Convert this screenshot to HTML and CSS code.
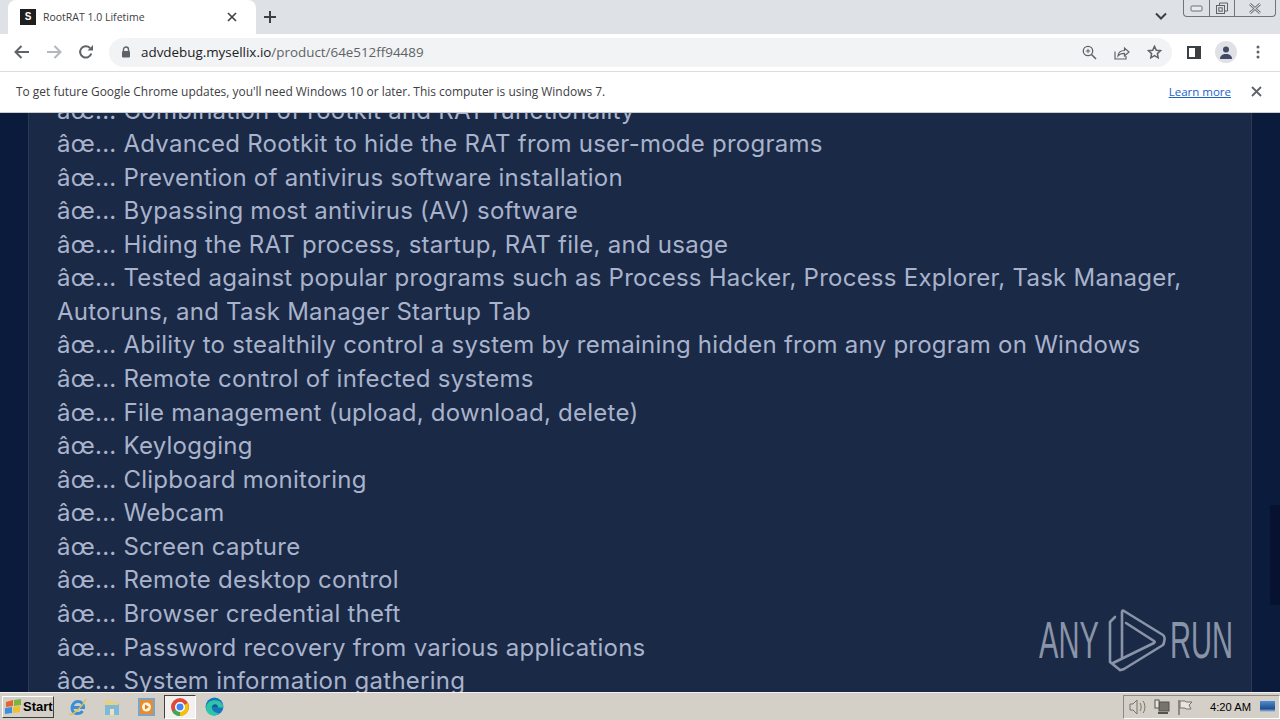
FILE: index.html
```html
<!DOCTYPE html>
<html lang="en">
<head>
<meta charset="utf-8">
<title>RootRAT 1.0 Lifetime</title>
<link rel="stylesheet" href="styles.css">
</head>
<body>
<div class="tabstrip">
  <div class="tab">
    <span class="favicon">S</span>
    <span class="tab-title">RootRAT 1.0 Lifetime</span>
    <svg class="tab-close" width="10" height="10" viewBox="0 0 10 10"><path d="M1 1l8 8M9 1l-8 8" stroke="#3c4043" stroke-width="1.6"/></svg>
  </div>
  <svg class="newtab" width="14" height="14" viewBox="0 0 14 14"><path d="M7 1v12M1 7h12" stroke="#3c4043" stroke-width="2"/></svg>
  <div class="strip-space"></div>
  <svg class="tab-chevron" width="12" height="8" viewBox="0 0 12 8"><path d="M1 1.500l5 5 5-5" fill="none" stroke="#3c4043" stroke-width="2"/></svg>
  <div class="winbtns">
    <span class="winbtn w-min"><svg width="13" height="7" viewBox="0 0 13 7"><rect x="1" y="1" width="11" height="5" rx="1" fill="#e8eaee" stroke="#6d7278"/></svg></span>
    <span class="winbtn w-max"><svg width="14" height="13" viewBox="0 0 14 13"><path d="M4.500 3.500v-2.500h8v8h-2.500" fill="none" stroke="#5f6368"/><rect x="1.500" y="3.500" width="8" height="8" fill="none" stroke="#5f6368"/><rect x="3.800" y="5.800" width="3.400" height="3.400" fill="none" stroke="#5f6368"/></svg></span>
    <span class="winbtn w-close"><svg width="14" height="11" viewBox="0 0 14 11"><path d="M2 1l10 9M12 1l-10 9" stroke="#6d7278" stroke-width="2.600"/><path d="M2 1l10 9M12 1l-10 9" stroke="#eceef1" stroke-width="1"/></svg></span>
  </div>
</div>
<div class="toolbar">
  <svg class="nav" width="16" height="14" viewBox="0 0 16 14"><path d="M15 7H2M7.500 1L1.500 7l6 6" fill="none" stroke="#5f6368" stroke-width="2"/></svg>
  <svg class="nav nav-fwd" width="16" height="14" viewBox="0 0 16 14"><path d="M1 7h13M8.500 1l6 6-6 6" fill="none" stroke="#b4b7bb" stroke-width="2"/></svg>
  <svg class="nav nav-reload" width="16" height="16" viewBox="0 0 16 16"><path d="M13.300 9.500A5.700 5.700 0 1 1 12 4" fill="none" stroke="#5f6368" stroke-width="2"/><path d="M9.500 6.500h5.500V1z" fill="#5f6368"/></svg>
  <div class="omnibox">
    <svg class="lock" width="10" height="12" viewBox="0 0 10 12"><path d="M2.500 5V3.500a2.500 2.500 0 0 1 5 0V5" fill="none" stroke="#5f6368" stroke-width="1.400"/><rect x="1" y="5" width="8" height="6.500" rx="1" fill="#5f6368"/></svg>
    <span class="url"><span class="host">advdebug.mysellix.io</span>/product/64e512ff94489</span>
    <span class="omni-space"></span>
    <svg class="omni-icon" width="15" height="15" viewBox="0 0 15 15"><circle cx="6" cy="6" r="4.700" fill="none" stroke="#5f6368" stroke-width="1.300"/><path d="M9.500 9.500l4.500 4.500" stroke="#5f6368" stroke-width="1.600"/><path d="M6 3.800v4.400M3.800 6h4.400" stroke="#5f6368"/></svg>
    <svg class="omni-icon" width="16" height="15" viewBox="0 0 16 15"><path d="M1 6.500v7.500h11v-3" fill="none" stroke="#5f6368" stroke-width="1.200"/><path d="M4 11c.3-3.500 3-5.500 6.500-5.500V3l4.500 4-4.500 4V8.300C7.800 8.200 5.500 9 4 11z" fill="none" stroke="#5f6368" stroke-width="1.200"/></svg>
    <svg class="omni-icon omni-star" width="15" height="14" viewBox="0 0 15 14"><path d="M7.500 1.300l1.800 3.900 4.200.5-3.100 2.900.8 4.200-3.700-2.100-3.700 2.100.8-4.200L1.500 5.700l4.200-.5z" fill="none" stroke="#5f6368" stroke-width="1.500"/></svg>
  </div>
  <svg class="tb-side" width="14" height="13" viewBox="0 0 14 13"><rect x="1" y="1" width="12" height="11" fill="#fff" stroke="#3c4043" stroke-width="2"/><rect x="8" y="1" width="5" height="11" fill="#3c4043"/></svg>
  <span class="avatar"><svg width="14" height="13" viewBox="0 0 14 13"><circle cx="7" cy="3.500" r="3" fill="#414a66"/><path d="M1 13c0-3.500 2.500-5 6-5s6 1.500 6 5z" fill="#414a66"/></svg></span>
  <svg class="tb-menu" width="4" height="14" viewBox="0 0 4 14"><circle cx="2" cy="2" r="1.500" fill="#5f6368"/><circle cx="2" cy="7" r="1.500" fill="#5f6368"/><circle cx="2" cy="12" r="1.500" fill="#5f6368"/></svg>
</div>
<div class="infobar">
  <span class="info-text">To get future Google Chrome updates, you'll need Windows 10 or later. This computer is using Windows 7.</span>
  <span class="info-space"></span>
  <a class="learn" href="#">Learn more</a>
  <svg class="info-close" width="11" height="11" viewBox="0 0 11 11"><path d="M1 1l9 9M10 1l-9 9" stroke="#5f6368" stroke-width="1.800"/></svg>
</div>
<main class="page">
  <div class="card">
    <p class="copy">âœ... Combination of rootkit and RAT functionality<br>
âœ... Advanced Rootkit to hide the RAT from user-mode programs<br>
âœ... Prevention of antivirus software installation<br>
âœ... Bypassing most antivirus (AV) software<br>
âœ... Hiding the RAT process, startup, RAT file, and usage<br>
âœ... Tested against popular programs such as Process Hacker, Process Explorer, Task Manager, Autoruns, and Task Manager Startup Tab<br>
âœ... Ability to stealthily control a system by remaining hidden from any program on Windows<br>
âœ... Remote control of infected systems<br>
âœ... File management (upload, download, delete)<br>
âœ... Keylogging<br>
âœ... Clipboard monitoring<br>
âœ... Webcam<br>
âœ... Screen capture<br>
âœ... Remote desktop control<br>
âœ... Browser credential theft<br>
âœ... Password recovery from various applications<br>
âœ... System information gathering</p>
  </div>
  <div class="scrollthumb"></div>
  <div class="watermark">
    <span class="wm-text">ANY</span>
    <svg class="wm-logo" width="58" height="64" viewBox="1108 608 58 64"><g fill="none" stroke="#8a94a8" stroke-width="2.600" stroke-linejoin="round" stroke-linecap="round"><path d="M1115 617l-5 5v40l10 8"/><path d="M1122 658V612q0-2 2-1l39 24q2 1.500 1.500 5t-1.500 5L1124 669q-2 1-4 1"/><path d="M1126 623l28 18q1.500 1 0 2l-41 20"/></g></svg>
    <span class="wm-text wm-run">RUN</span>
  </div>
</main>
<footer class="taskbar">
  <button class="start"><svg width="17" height="15" viewBox="0 0 17 15"><path d="M1 3l7-2v6l-7 1z" fill="#e8642a"/><path d="M9 1l7-1v6l-7 1z" fill="#7cb53c"/><path d="M0 9l7-1v6l-7 1z" fill="#3b8ee0"/><path d="M8 8l7-1v6l-7 1z" fill="#f0c030"/></svg><span>Start</span></button>
  <div class="quick">
    <span class="qi"><svg width="20" height="20" viewBox="0 0 20 20"><path d="M4.500 10.500h11c0-3.500-2-6-5.500-6s-6 3-6 6.500 2.500 5.500 5.500 5.500c2.500 0 4-1 5-2.500" fill="none" stroke="#3a8fd8" stroke-width="3"/><path d="M1.500 17c2.500 2 12-6 16.500-15" fill="none" stroke="#e4c14a" stroke-width="1.400"/></svg></span>
    <span class="qi"><svg width="18" height="18" viewBox="0 0 18 18"><path d="M2 6h14v11H2z" fill="#7fb9d8"/><path d="M2 2h6l2 2h5v3H2z" fill="#e6cf86"/><path d="M7 17v-6h4v6z" fill="#e9e2c4"/></svg></span>
    <span class="qi"><svg width="17" height="18" viewBox="0 0 17 18"><rect x="1" y="1" width="15" height="16" fill="#e88c2c" stroke="#7ba4c8" stroke-width="2"/><circle cx="8.500" cy="9" r="4.500" fill="#fff3d9"/><path d="M7 6.500l4 2.500-4 2.500z" fill="#e07a20"/></svg></span>
    <span class="qi qi-active"><svg width="18" height="18" viewBox="0 0 16 16"><circle cx="8" cy="8" r="8" fill="#dd4b39"/><path d="M8 8L1 12a8 8 0 0 0 7 4z" fill="#3fa757"/><path d="M8 8l7-3.600A8 8 0 0 1 8 16z" fill="#f4c20d"/><circle cx="8" cy="8" r="3.800" fill="#4285f4" stroke="#fff" stroke-width="1.400"/></svg></span>
    <span class="qi"><svg width="19" height="19" viewBox="0 0 17 17"><circle cx="8.500" cy="8.500" r="8" fill="#1377bd"/><path d="M1 10C1 5 5 3 9 3c4 0 7 2.500 7.500 6.500H6c.3 2.500 2.500 5 6.500 5-1 1.200-2.500 2-4 2C4 16.500 1 14 1 10z" fill="#2fc4a8"/><path d="M6 9.500c.3-2 1.500-3 3-3s2.500 1 2.800 3z" fill="#0e5a96"/></svg></span>
  </div>
  <span class="task-space"></span>
  <div class="tray">
    <svg width="18" height="16" viewBox="0 0 18 16"><path d="M1 5h3l4-4v14l-4-4H1z" fill="#d7d3cc" stroke="#77736c"/><path d="M11 4c1.500 2 1.500 6 0 8M14 2c2.500 3 2.500 9 0 12" fill="none" stroke="#77736c"/></svg>
    <svg width="16" height="16" viewBox="0 0 16 16"><rect x="5" y="3" width="10" height="9" fill="#77736c" stroke="#55524c"/><rect x="1" y="1" width="4" height="8" fill="#e8e5de" stroke="#55524c"/><path d="M4 14h10" stroke="#55524c" stroke-width="2"/></svg>
    <svg width="16" height="16" viewBox="0 0 16 16"><path d="M2 1v15" stroke="#77736c" stroke-width="1.500"/><path d="M3 2h5l1 1h6l-3 3 2 4H9L8 9H3z" fill="#e8e5de" stroke="#77736c"/></svg>
    <span class="clock">4:20 AM</span>
    <span class="showdesk"></span>
  </div>
</footer>
</body>
</html>
```
FILE: styles.css
```css
* { box-sizing: border-box; }
html, body { margin: 0; height: 720px; overflow: hidden; }
body { display: flex; flex-direction: column; width: 1280px; font-family: "Liberation Sans", sans-serif; background: #fff; }

.tabstrip { height: 34px; flex: none; background: #dee1e6; display: flex; align-items: flex-start; }
.tab { width: 248px; height: 34px; margin-left: 8px; padding: 0 10px 0 12px; background: #fff; border-radius: 8px 8px 0 0; display: flex; align-items: center; }
.favicon { width: 16px; height: 16px; background: #1f1f1f; color: #fff; font: bold 10px/16px "Liberation Sans", sans-serif; text-align: center; flex: none; }
.tab-title { margin-left: 7px; font-family: "Open Sans", sans-serif; font-size: 10.500px; color: #3c4043; flex: 1; white-space: nowrap; }
.tab-close { margin-right: 9px; }
.newtab { margin: 10px 0 0 7px; }
.strip-space { flex: 1; }
.tab-chevron { margin: 12px 16px 0 0; }
.winbtns { display: flex; height: 17px; width: 93px; margin-right: 4px; background: #dee1e6; border: 1px solid #70757c; border-top: 0; border-radius: 0 0 4px 4px; }
.winbtn { display: flex; align-items: center; justify-content: center; border-left: 1px solid #70757c; }
.w-min { width: 25px; border-left: 0; }
.w-max { width: 25px; }
.w-close { flex: 1; }

.toolbar { height: 38px; flex: none; background: #fff; border-bottom: 1px solid #dadce0; display: flex; align-items: center; padding-bottom: 1px; }
.nav { margin-left: 14px; flex: none; }
.nav-fwd { margin-left: 16px; }
.nav-reload { margin-left: 16px; }
.omnibox { margin-left: 15px; width: 1063px; height: 29px; background: #f1f3f4; border-radius: 15px; display: flex; align-items: center; padding: 0 10px 0 12px; }
.lock { flex: none; }
.url { margin-left: 10px; font-family: "Open Sans", sans-serif; font-size: 13.400px; color: #5f6368; white-space: nowrap; }
.host { color: #202124; }
.omni-space { flex: 1; }
.omni-icon { margin-left: 17px; flex: none; }
.tb-side { margin-left: 15px; flex: none; }
.avatar { margin-left: 14px; width: 22px; height: 22px; border-radius: 50%; background: #dfe1e7; display: flex; align-items: center; justify-content: center; flex: none; }
.tb-menu { margin-left: 19px; flex: none; }

.infobar { height: 41px; flex: none; background: #fff; border-bottom: 1px solid #c9ccd0; display: flex; align-items: center; padding: 0 18px 2px 16px; }
.info-text { font-family: "Open Sans", sans-serif; font-size: 11.950px; color: #3c4043; white-space: nowrap; }
.info-space { flex: 1; }
.learn { font-family: "Open Sans", sans-serif; font-size: 11.500px; color: #1a62c9; }
.info-close { margin-left: 20px; }

.page { flex: 1; min-height: 0; position: relative; overflow: hidden; background: #0a1b3b; }
.card { width: 1224px; margin: -19.500px 0 0 28px; height: 640px; background: #1a2945; border-left: 1px solid #2c3a58; border-right: 1px solid #2c3a58; padding: 0 28px; }
.copy { margin: 0; font-family: Inter, sans-serif; font-size: 24px; line-height: 33.570px; letter-spacing: .25px; color: #a9b3cc; }
.scrollthumb { position: absolute; right: 0; top: 392px; width: 10px; height: 100px; background: #061230; }
.watermark { position: absolute; left: 1039px; top: 495px; display: flex; align-items: center; }
.wm-text { font-family: "Liberation Sans", sans-serif; font-size: 52px; line-height: 64px; color: #8a94a8; display: inline-block; width: 69px; transform-origin: left; transform: scaleX(.56); white-space: nowrap; }
.wm-run { width: 61px; margin-left: 4px; }
.wm-logo { flex: none; }

.taskbar { height: 28px; flex: none; background: #d4d0c8; border-top: 1px solid #f4f2ee; display: flex; align-items: center; }
.start { width: 52px; height: 22px; margin-left: 2px; padding: 0 0 0 2px; background: #d4d0c8; border: 1px solid; border-color: #fff #404040 #404040 #fff; display: flex; align-items: center; gap: 1px; font: bold 13px "Liberation Sans", sans-serif; color: #000; }
.quick { display: flex; margin-left: 7px; align-items: center; }
.qi { width: 34px; height: 24px; display: flex; align-items: center; justify-content: center; }
.qi-active { width: 32px; height: 24px; background: #f3f1ed; border: 1px solid; border-color: #404040 #fff #fff #404040; margin: 0 1px; }
.task-space { flex: 1; }
.tray { height: 24px; width: 157px; display: flex; align-items: center; gap: 7px; padding-left: 5px; border: 1px solid; border-color: #8c8983 #fff #fff #8c8983; }
.clock { margin-left: 10px; font-size: 11.200px; color: #000; white-space: nowrap; }
.showdesk { margin-left: 2px; width: 15px; height: 11px; background: linear-gradient(#4f8dd0, #1d4f8f 70%, #bcd0e6); flex: none; }
```
